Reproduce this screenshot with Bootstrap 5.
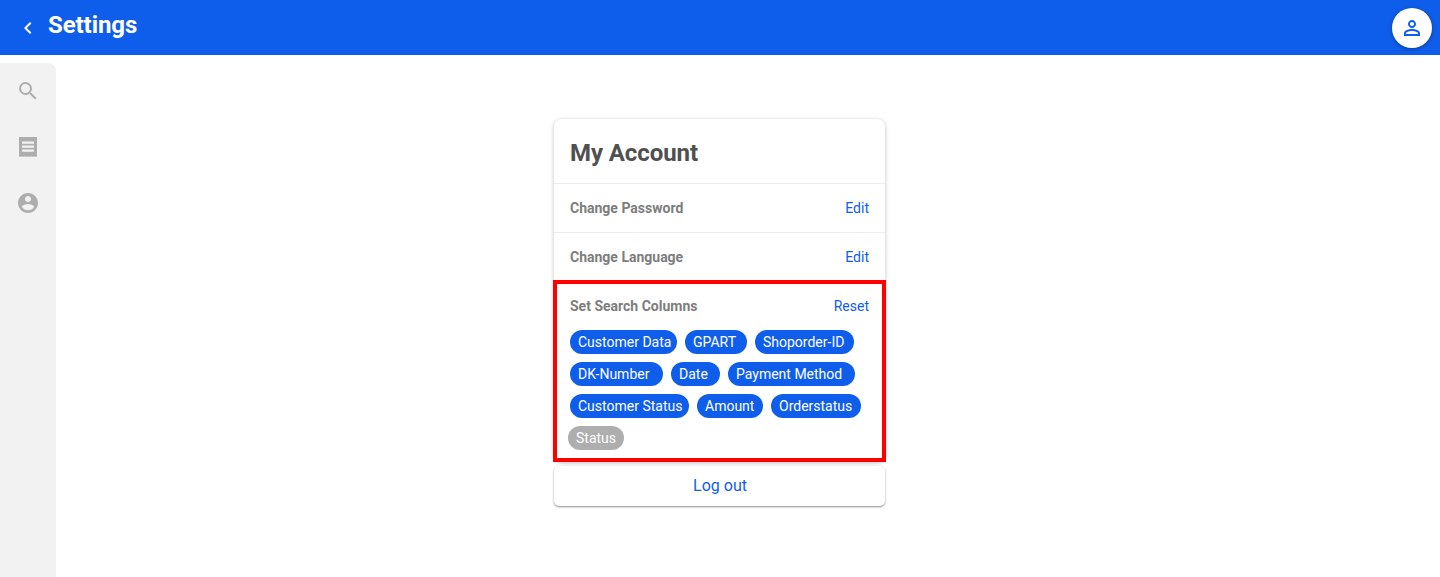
<!DOCTYPE html>
<html lang="en">
  <head>
    <meta charset="UTF-8" />
    <meta name="viewport" content="width=device-width, initial-scale=1.0" />
    <title>Settings</title>
    <link href="https://cdn.jsdelivr.net/npm/bootstrap@5.3.6/dist/css/bootstrap.min.css" rel="stylesheet" crossorigin="anonymous">
    <script src="https://cdn.jsdelivr.net/npm/bootstrap@5.3.6/dist/js/bootstrap.bundle.min.js" crossorigin="anonymous"></script>
    <style>
      body {
        font-family: Roboto, "Liberation Sans", sans-serif;
        background-color: #fff;
        height: 577px;
        overflow: hidden;
      }

      .top-bar {
        height: 55px;
        background-color: #0f5eeb;
        color: #fff;
        padding: 0 8px 0 16px;
      }

      .top-bar h1 {
        font-size: 24px;
        font-weight: 700;
        letter-spacing: -0.08px;
        line-height: 28px;
        margin: 0 0 5px 8px;
      }

      .back-icon {
        width: 24px;
        height: 24px;
        fill: #fff;
      }

      .avatar-btn {
        width: 40px;
        height: 40px;
        border-radius: 50%;
        background: #fff;
        box-shadow: 0 1px 4px rgba(0, 0, 0, 0.35);
      }

      .avatar-btn svg {
        width: 24px;
        height: 24px;
        fill: #0f5eeb;
      }

      .side-rail {
        width: 56px;
        margin-top: 8px;
        height: 514px;
        background-color: #f2f2f2;
        border-top-right-radius: 8px;
        padding-top: 16px;
      }

      .side-rail svg {
        width: 24px;
        height: 24px;
        fill: #aeaeae;
        margin: 0 16px 32px;
        display: block;
      }

      .main-area {
        padding-top: 64px;
        padding-right: 57px;
      }

      .account-box {
        width: 331px;
      }

      .panel {
        background: #fff;
        border-radius: 8px;
        box-shadow: 0 1px 4px rgba(0, 0, 0, 0.25);
      }

      .panel-title {
        height: 65px;
        padding: 0 16px;
        border-bottom: 1px solid #eeeeee;
        font-size: 24px;
        font-weight: 700;
        letter-spacing: -0.08px;
        color: #505050;
        line-height: 68px;
      }

      .setting-row {
        height: 49px;
        padding: 0 16px;
        border-bottom: 1px solid #eeeeee;
      }

      .setting-label {
        font-size: 14px;
        font-weight: 700;
        color: #7d7d7d;
      }

      .setting-link {
        font-size: 14px;
        color: #0f5eeb;
        text-decoration: none;
      }

      .columns-box {
        margin: -2px -1px 0;
        height: 182px;
        border: 4px solid #ff0000;
        padding: 0 13px;
        background: #fff;
        position: relative;
      }

      .columns-head {
        height: 44px;
        margin-bottom: 2px;
      }

      .chip-wrap {
        gap: 8px;
      }

      .chip {
        height: 24px;
        line-height: 24px;
        padding-left: 8px;
        border-radius: 12px;
        font-size: 14px;
        color: #fff;
        background-color: #0f5eeb;
        white-space: nowrap;
      }

      /* chips keep the uneven widths of the original */
      .chip:nth-child(1) { width: 107px; }
      .chip:nth-child(2) { width: 62px; }
      .chip:nth-child(3) { width: 99px; }
      .chip:nth-child(4) { width: 93px; }
      .chip:nth-child(5) { width: 49px; }
      .chip:nth-child(6) { width: 127px; }
      .chip:nth-child(7) { width: 119px; }
      .chip:nth-child(8) { width: 66px; }
      .chip:nth-child(9) { width: 90px; }
      .chip:nth-child(10) { width: 56px; }

      .chip-off {
        background-color: #aeaeae;
        margin-left: -2px;
      }

      .logout-panel {
        display: block;
        margin-top: 4px;
        height: 40px;
        line-height: 40px;
        padding-left: 1px;
        text-align: center;
        font-size: 16px;
        color: #0f5eeb;
        text-decoration: none;
        border-radius: 5px;
        box-shadow: 0 1px 2px rgba(0, 0, 0, 0.45);
      }
    </style>
  </head>
  <body>

    <header class="top-bar d-flex align-items-center">
      <svg class="back-icon" viewBox="0 0 24 24"><path d="M15.4 7.4 14 6l-6 6 6 6 1.4-1.4-4.6-4.6z"/></svg>
      <h1>Settings</h1>
      <div class="avatar-btn d-flex align-items-center justify-content-center ms-auto">
        <svg viewBox="0 0 24 24"><path d="M12 5.9a2.1 2.1 0 1 1 0 4.2 2.1 2.1 0 0 1 0-4.2m0 9c2.97 0 6.1 1.46 6.1 2.1v1.1H5.9V17c0-.64 3.13-2.1 6.1-2.1M12 4C9.79 4 8 5.79 8 8s1.79 4 4 4 4-1.79 4-4-1.79-4-4-4zm0 9c-2.67 0-8 1.34-8 4v3h16v-3c0-2.66-5.33-4-8-4z"/></svg>
      </div>
    </header>

    <div class="d-flex">
      <nav class="side-rail flex-shrink-0">
        <svg viewBox="0 0 24 24"><path d="M15.5 14h-.79l-.28-.27A6.47 6.47 0 0 0 16 9.5 6.5 6.5 0 1 0 9.5 16c1.61 0 3.09-.59 4.23-1.57l.27.28v.79l5 4.99L20.49 19l-4.99-5zm-6 0C7.01 14 5 11.99 5 9.5S7.01 5 9.5 5 14 7.01 14 9.5 11.99 14 9.5 14z"/></svg>
        <svg viewBox="0 0 24 24"><path fill-rule="evenodd" d="M3 2h18v19.9l-.75-.7-.75.7-.75-.7-.75.7-.75-.7-.75.7-.75-.7-.75.7-.75-.7-.75.7-.75-.7-.75.7-.75-.7-.75.7-.75-.7-.75.7-.75-.7-.75.7-.75-.7-.75.7-.75-.7-.75.7-.75-.7-.75.7zM6 6.4v2.3h12V6.4zm0 4v2.3h12v-2.3zm0 4v2.3h12v-2.3z"/></svg>
        <svg viewBox="0 0 24 24"><path d="M12 2C6.48 2 2 6.48 2 12s4.48 10 10 10 10-4.48 10-10S17.52 2 12 2zm0 3c1.66 0 3 1.34 3 3s-1.34 3-3 3-3-1.34-3-3 1.34-3 3-3zm0 14.2a7.2 7.2 0 0 1-6-3.22c.03-1.99 4-3.08 6-3.08s5.97 1.09 6 3.08a7.2 7.2 0 0 1-6 3.22z"/></svg>
      </nav>

      <main class="main-area flex-grow-1 d-flex justify-content-center">
        <div class="account-box">
          <div class="panel">
            <div class="panel-title">My Account</div>
            <div class="setting-row d-flex align-items-center justify-content-between">
              <span class="setting-label">Change Password</span>
              <a class="setting-link" href="#">Edit</a>
            </div>
            <div class="setting-row d-flex align-items-center justify-content-between">
              <span class="setting-label">Change Language</span>
              <a class="setting-link" href="#">Edit</a>
            </div>
            <div class="columns-box">
              <div class="columns-head d-flex align-items-center justify-content-between">
                <span class="setting-label">Set Search Columns</span>
                <a class="setting-link" href="#">Reset</a>
              </div>
              <div class="chip-wrap d-flex flex-wrap">
                <span class="chip">Customer Data</span>
                <span class="chip">GPART</span>
                <span class="chip">Shoporder-ID</span>
                <span class="chip">DK-Number</span>
                <span class="chip">Date</span>
                <span class="chip">Payment Method</span>
                <span class="chip">Customer Status</span>
                <span class="chip">Amount</span>
                <span class="chip">Orderstatus</span>
                <span class="chip chip-off">Status</span>
              </div>
            </div>
          </div>
          <a class="panel logout-panel" href="#">Log out</a>
        </div>
      </main>
    </div>

  </body>
</html>
